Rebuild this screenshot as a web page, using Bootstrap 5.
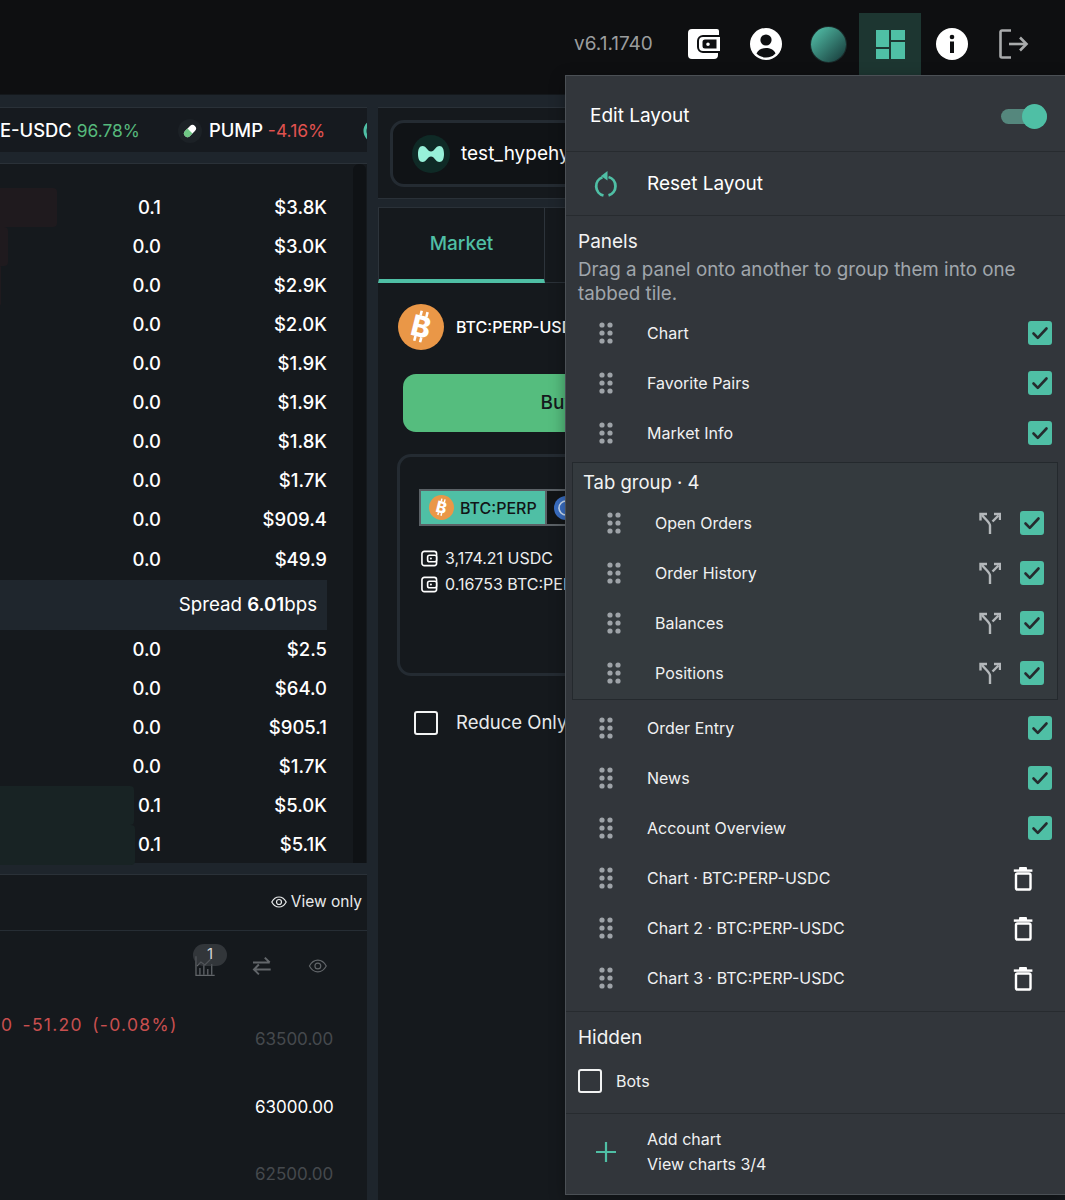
<!DOCTYPE html>
<html lang="en">
<head>
<meta charset="utf-8">
<title>Layout menu</title>
<link href="https://cdn.jsdelivr.net/npm/bootstrap@5.3.0/dist/css/bootstrap.min.css" rel="stylesheet">
<style>
  body { background: #1e252c; color: #fff; font-family: Inter, "Liberation Sans", sans-serif; }
  .app-frame { position: relative; width: 1065px; height: 1200px; overflow: hidden; background: #1e252c; }

  .top-bar { height: 95px; background: #0e0f11; padding-right: 20px; border-bottom: 1px solid #14181c; }
  .version-text { color: #9b9d9e; font-size: 19px; width: 99px; height: 62px; margin-top: 13px; }
  .top-icon { width: 62px; height: 62px; margin-top: 13px; }
  .top-icon.is-active { background: #1d3631; }
  .globe-dot { width: 35px; height: 35px; border-radius: 50%; background: linear-gradient(135deg, #4fb8a2 10%, #1e4a47 85%); box-shadow: 0 0 0 1px #1b2a2a; }

  .main-area { height: 1105px; padding-top: 12px; gap: 11px; }
  .left-col { width: 367px; flex: none; }
  .right-col { width: 687px; flex: none; }
  .dark-panel { background: #15191d; border-top: 1px solid #2a3138; }

  .ticker-bar { height: 45px; padding-top: 1px; font-size: 18.4px; font-weight: 500; white-space: nowrap; overflow: hidden; margin-bottom: 11px; background: #161a1f; }
  .ticker-up { color: #56b97c; font-weight: 400; font-size: 17.4px; }
  .ticker-down { color: #e0524f; font-weight: 400; font-size: 17.5px; }
  .pump-pill { margin: 0 7px 0 38px; flex: none; }
  .next-coin { margin-left: 38px; flex: none; }

  .book-panel { height: 700px; padding-right: 1px; }
  .book-rows { width: 353px; padding-top: 24px; }
  .book-scroll { width: 13px; background: #0f1215; border-radius: 6px 6px 0 0; }
  .book-row { position: relative; height: 39.1px; font-size: 18.5px; font-weight: 500; }
  .book-bar { position: absolute; left: 0; top: 0; bottom: 0; border-radius: 0 4px 4px 0; }
  .bar-sell { background: #1f1a1e; }
  .bar-buy { background: #182324; }
  .book-size { position: relative; width: 161px; text-align: right; }
  .book-total { position: relative; width: 166px; text-align: right; }
  .spread-row { width: 327px; height: 50px; background: #1f262d; padding-right: 10px; font-size: 18.7px; margin-top: 1px; }

  .chart-panel { height: 400px; margin-top: 11px; }
  .chart-head { height: 56px; border-bottom: 1px solid #262d34; padding: 0 5px 2px 0; font-size: 15.5px; color: #e8eaeb; gap: 4px; }
  .chart-tools { height: 70px; gap: 37px; padding: 0 39px 0 195px; position: relative; }
  .tool-badge { position: absolute; left: 193px; top: 13px; width: 34px; height: 22px; border-radius: 11px; background: rgba(70, 74, 78, .6); color: #d4d6d7; font-size: 15px; line-height: 20px; text-align: center; }
  .tool-chart { position: relative; }
  .chart-body { padding-left: 1px; }
  .chart-legend { width: 254px; color: #c84f4f; font-size: 17.5px; letter-spacing: 1.3px; word-spacing: 3px; padding-top: 11px; white-space: nowrap; }
  .axis-col { font-size: 17px; color: #45494d; padding-top: 27px; line-height: 22px; }
  .axis-col div { margin-bottom: 45.5px; }
  .axis-col .axis-now { color: #fff; }

  .account-panel { height: 92px; padding: 12px; margin-bottom: 8px; border-bottom: 1px solid #2a3138; }
  .account-box { width: 400px; height: 67px; border: 3px solid #242b32; border-radius: 14px; background: #101316; padding: 1px 0 0 19px; gap: 11px; font-size: 19px; white-space: nowrap; }
  .order-panel { height: 1000px; }
  .order-tabs { height: 75px; }
  .order-tab { width: 167px; height: 75px; border-right: 1px solid #2d343b; border-left: 1px solid #2d343b; border-bottom: 4px solid #4fbfa5; color: #4fbfa5; font-size: 19px; font-weight: 500; padding-top: 1px; }
  .order-tab-rest { flex: 1; border-bottom: 1px solid #2a3138; }
  .pair-line { padding: 21px 0 0 20px; gap: 12px; font-size: 16px; font-weight: 500; white-space: nowrap; }
  .side-buy { width: 310px; height: 58px; margin: 24px 0 0 25px; background: #55bd7e; border: 0; border-radius: 13px; color: #15191d; font-size: 19px; font-weight: 500; padding: 0; }
  .balance-box { width: 300px; height: 222px; margin: 22px 0 0 19px; border: 3px solid #242b32; border-radius: 14px; padding: 32px 0 0 19px; }
  .asset-tabs { height: 37px; margin-bottom: 19px; }
  .asset-tab { width: 128px; border: 2px solid #5b6166; background: #4fbfa5; color: #121517; font-size: 16px; font-weight: 500; gap: 6px; padding-left: 8px; }
  .asset-tab-other { width: 100px; border: 2px solid #5b6166; border-left: 0; background: #121517; padding-left: 7px; }
  .wallet-line { font-size: 16px; color: #eceeef; gap: 7px; height: 26px; padding-left: 2px; white-space: nowrap; }
  .reduce-line { margin: 33px 0 0 36px; gap: 18px; font-size: 18.5px; color: #e9ebec; white-space: nowrap; }

  .layout-menu { position: absolute; left: 565px; top: 75px; width: 500px; height: 1120px; background: #32363b; border: 1px solid #4b5055; border-right: 0; box-shadow: 0 4px 14px rgba(0,0,0,.35); }
  .menu-head { height: 76px; border-bottom: 1px solid #272b2f; padding: 5px 18px 0 24px; font-size: 19px; }
  .edit-toggle { position: relative; width: 46px; height: 15px; border-radius: 8px; background: #55877d; }
  .edit-toggle::after { content: ""; position: absolute; right: 0; top: -5px; width: 25px; height: 25px; border-radius: 50%; background: #4fbfa5; }
  .menu-reset { height: 64px; border-bottom: 1px solid #272b2f; font-size: 19px; padding: 1px 0 0 28px; gap: 29px; }
  .panel-block { padding: 14px 13px 0 12px; }
  .menu-title { font-size: 19px; line-height: 24px; color: #f2f3f3; }
  .menu-note { font-size: 18.8px; line-height: 24px; color: #a0a6ac; margin-top: 4px; white-space: nowrap; }
  .panel-row { height: 50px; padding-left: 21px; font-size: 16px; color: #f0f1f2; }
  .panel-row .row-label { margin-left: 34px; flex: 1; white-space: nowrap; }
  .panel-list { margin-top: 2px; }
  .tab-group { margin: 4px -6px 3px -6px; border: 1px solid #24292d; background: #343a3e; height: 238px; padding: 7px 13px 0 0; }
  .tab-group .panel-row { padding-left: 34px; }
  .tab-group-title { font-size: 18.5px; line-height: 24px; padding-left: 10px; margin-bottom: 4px; color: #f2f3f3; }
  .split-btn { margin-right: 19px; }
  .trash-btn { margin: 1px 14px 0 0; }
  .trash-list .panel-row { padding-right: 5px; }
  .hidden-block { border-top: 1px solid #272b2f; margin-top: 8px; padding: 14px 12px 0; height: 102px; }
  .hidden-row { height: 42px; margin-top: 10px; gap: 14px; font-size: 16px; color: #f0f1f2; }
  .add-block { border-top: 1px solid #272b2f; height: 82px; padding: 0 0 6px 30px; font-size: 16px; line-height: 25px; color: #f0f1f2; gap: 31px; }

  .form-check-input.pick-box { width: 24px; height: 24px; margin: 0; flex: none; border: 2px solid #f2f3f3; border-radius: 3px; background-color: transparent; }
  .form-check-input.pick-box:checked { background-color: #4fbfa5; border-color: #4fbfa5; background-size: 20px; background-image: url("data:image/svg+xml,%3csvg xmlns='http://www.w3.org/2000/svg' viewBox='0 0 20 20'%3e%3cpath fill='none' stroke='%23252b2e' stroke-linecap='round' stroke-linejoin='round' stroke-width='2.6' d='m3.500 10.500 4.300 4.300L16.500 5.500'/%3e%3c/svg%3e"); }
</style>
</head>
<body>

<svg width="0" height="0" class="d-none">
  <symbol id="grip" viewBox="0 0 14 22"><g fill="#9ea3a8"><circle cx="3" cy="3" r="2.6"/><circle cx="11" cy="3" r="2.6"/><circle cx="3" cy="11" r="2.6"/><circle cx="11" cy="11" r="2.6"/><circle cx="3" cy="19" r="2.6"/><circle cx="11" cy="19" r="2.6"/></g></symbol>
  <symbol id="split" viewBox="0 0 22 22"><g fill="none" stroke="#b4b8bb" stroke-width="2.400"><path d="M11 22V13.500C11 10.500 7 8 3 3"/><path d="M13.500 9.500 19.500 3.500"/><path d="M1.500 8.500V2H8"/><path d="M15 2H21V8"/></g></symbol>
  <symbol id="trash" viewBox="0 0 20 24"><g fill="none" stroke="#fff" stroke-width="2.400"><rect x="3" y="6.500" width="14.500" height="16" rx="1.600"/><path d="M.8 3.600h18.600"/></g><path fill="#fff" d="M6 1.200C6 .5 6.600 0 7.200 0h5.600c.7 0 1.200.5 1.200 1.200V3H6z"/></symbol>
  <symbol id="wallet-line" viewBox="0 0 18 18"><rect x="1" y="1.500" width="15.500" height="15" rx="2.500" fill="none" stroke="#fff" stroke-width="1.700"/><rect x="7" y="5.500" width="9.500" height="7" rx="2" fill="#15191d" stroke="#fff" stroke-width="1.700"/><circle cx="10.500" cy="9" r="1.100" fill="#fff"/></symbol>
  <symbol id="btc" viewBox="0 0 46 46"><circle cx="23" cy="23" r="23" fill="#ea9747"/><g transform="rotate(14 23 23)" fill="#fff"><text x="23" y="33" text-anchor="middle" font-family="Inter, Liberation Sans, sans-serif" font-weight="800" font-size="29">B</text><rect x="18.500" y="7" width="2.600" height="5"/><rect x="24.500" y="7" width="2.600" height="5"/><rect x="18.500" y="33" width="2.600" height="5"/><rect x="24.500" y="33" width="2.600" height="5"/></g></symbol>
</svg>

<div class="app-frame">

  <header class="top-bar d-flex justify-content-end align-items-start">
    <div class="version-text d-flex align-items-center">v6.1.1740</div>
    <div class="top-icon d-flex align-items-center justify-content-center">
      <svg width="32" height="30" viewBox="0 0 32 30"><path fill="#fff" fill-rule="evenodd" d="M4 0h25a2 2 0 0 1 2 2v4H15a6 6 0 0 0-6 6v6a6 6 0 0 0 6 6h15v2a4 4 0 0 1-4 4H4a4 4 0 0 1-4-4V4a4 4 0 0 1 4-4z"/><path fill="#fff" fill-rule="evenodd" d="M15 8h17v14H15a4 4 0 0 1-4-4v-6a4 4 0 0 1 4-4zm2 2.500a2.500 2.500 0 0 0-2.500 2.500v4a2.500 2.500 0 0 0 2.500 2.500h11.500v-9zm3 3a1.800 1.800 0 1 1 0 3.600 1.800 1.800 0 0 1 0-3.600z"/></svg>
    </div>
    <div class="top-icon d-flex align-items-center justify-content-center">
      <svg width="32" height="32" viewBox="0 0 32 32"><circle cx="16" cy="16" r="16" fill="#fff"/><circle cx="16" cy="12" r="5.600" fill="#0e0f11"/><path fill="#0e0f11" d="M6.500 25.500C8 21.500 12 20 16 20s8 1.500 9.500 5.500C23 28 19.800 29.500 16 29.500S9 28 6.500 25.500z"/></svg>
    </div>
    <div class="top-icon d-flex align-items-center justify-content-center"><div class="globe-dot"></div></div>
    <div class="top-icon is-active d-flex align-items-center justify-content-center">
      <svg width="29" height="29" viewBox="0 0 29 29" fill="#4fbfa5"><rect width="13" height="17"/><rect y="19" width="13" height="10"/><rect x="15" width="14" height="10"/><rect x="15" y="12" width="14" height="17"/></svg>
    </div>
    <div class="top-icon d-flex align-items-center justify-content-center">
      <svg width="32" height="32" viewBox="0 0 32 32"><circle cx="16" cy="16" r="16" fill="#fff"/><circle cx="16" cy="9" r="2.300" fill="#0e0f11"/><rect x="14" y="13.500" width="4" height="11.500" fill="#0e0f11"/></svg>
    </div>
    <div class="top-icon d-flex align-items-center justify-content-center">
      <svg width="30" height="30" viewBox="0 0 30 30" fill="none" stroke="#a9abac" stroke-width="2.600"><path d="M12 1.500H3a1.500 1.500 0 0 0-1.500 1.500v24A1.500 1.500 0 0 0 3 28.500h9"/><path d="M10 15h17"/><path d="m21 8.500 6.500 6.500-6.500 6.500"/></svg>
    </div>
  </header>

  <div class="main-area d-flex">
    <div class="left-col">
      <div class="ticker-bar dark-panel d-flex align-items-center">
        <span>E-USDC&nbsp;<span class="ticker-up">96.78%</span></span>
        <svg class="pump-pill" width="24" height="24" viewBox="0 0 24 24"><circle cx="12" cy="12" r="12" fill="#1c2126"/><g transform="rotate(-45 12 12)"><rect x="5" y="8.500" width="14" height="7" rx="3.500" fill="#fff"/><path d="M5 12a3.500 3.500 0 0 1 3.500-3.500H12v7H8.500A3.500 3.500 0 0 1 5 12z" fill="#6fc784"/></g></svg>
        <span>PUMP&nbsp;<span class="ticker-down">-4.16%</span></span>
        <svg class="next-coin" width="24" height="24" viewBox="0 0 24 24"><circle cx="12" cy="12" r="10" fill="none" stroke="#4fbfa5" stroke-width="3"/></svg>
      </div>

      <div class="book-panel dark-panel d-flex">
        <div class="book-rows">
          <div class="book-row d-flex align-items-center"><div class="book-bar bar-sell" style="width:57px"></div><div class="book-size">0.1</div><div class="book-total">$3.8K</div></div>
          <div class="book-row d-flex align-items-center"><div class="book-bar bar-sell" style="width:8px"></div><div class="book-size">0.0</div><div class="book-total">$3.0K</div></div>
          <div class="book-row d-flex align-items-center"><div class="book-bar bar-sell" style="width:1px"></div><div class="book-size">0.0</div><div class="book-total">$2.9K</div></div>
          <div class="book-row d-flex align-items-center"><div class="book-size">0.0</div><div class="book-total">$2.0K</div></div>
          <div class="book-row d-flex align-items-center"><div class="book-size">0.0</div><div class="book-total">$1.9K</div></div>
          <div class="book-row d-flex align-items-center"><div class="book-size">0.0</div><div class="book-total">$1.9K</div></div>
          <div class="book-row d-flex align-items-center"><div class="book-size">0.0</div><div class="book-total">$1.8K</div></div>
          <div class="book-row d-flex align-items-center"><div class="book-size">0.0</div><div class="book-total">$1.7K</div></div>
          <div class="book-row d-flex align-items-center"><div class="book-size">0.0</div><div class="book-total">$909.4</div></div>
          <div class="book-row d-flex align-items-center"><div class="book-size">0.0</div><div class="book-total">$49.9</div></div>
          <div class="spread-row d-flex align-items-center justify-content-end"><span>Spread <b class="fw-semibold">6.01</b>bps</span></div>
          <div class="book-row d-flex align-items-center"><div class="book-size">0.0</div><div class="book-total">$2.5</div></div>
          <div class="book-row d-flex align-items-center"><div class="book-size">0.0</div><div class="book-total">$64.0</div></div>
          <div class="book-row d-flex align-items-center"><div class="book-size">0.0</div><div class="book-total">$905.1</div></div>
          <div class="book-row d-flex align-items-center"><div class="book-size">0.0</div><div class="book-total">$1.7K</div></div>
          <div class="book-row d-flex align-items-center"><div class="book-bar bar-buy" style="width:134px"></div><div class="book-size">0.1</div><div class="book-total">$5.0K</div></div>
          <div class="book-row d-flex align-items-center"><div class="book-bar bar-buy" style="width:135px"></div><div class="book-size">0.1</div><div class="book-total">$5.1K</div></div>
        </div>
        <div class="book-scroll"></div>
      </div>

      <div class="chart-panel dark-panel">
        <div class="chart-head d-flex align-items-center justify-content-end">
          <svg width="16" height="12" viewBox="0 0 16 12" fill="none" stroke="#e8eaeb" stroke-width="1.200"><path d="M.8 6C2.500 2.800 5 1 8 1s5.500 1.800 7.200 5C13.500 9.200 11 11 8 11S2.500 9.200.8 6z"/><circle cx="8" cy="6" r="2.500"/></svg>
          <span>View only</span>
        </div>
        <div class="chart-tools d-flex align-items-center">
          <svg class="tool-chart" width="20" height="20" viewBox="0 0 20 20" fill="none" stroke="#62666a" stroke-width="1.300"><path d="M1 0v19.500h19"/><path d="M5 19v-7M9 19V9M13 19v-6M17 19V8"/><path d="m2 10 4-4 4 3 6-6"/></svg>
          <div class="tool-badge">1</div>
          <svg width="20" height="20" viewBox="0 0 20 20" fill="none" stroke="#62666a" stroke-width="2"><path d="M1 6.500h17M13 1.500l5 5M19 13.500H2M7 8.500l-5 5 5 5"/></svg>
          <svg width="20" height="14" viewBox="0 0 16 12" fill="none" stroke="#62666a" stroke-width="1"><path d="M.8 6C2.500 2.800 5 1 8 1s5.500 1.800 7.200 5C13.500 9.200 11 11 8 11S2.500 9.200.8 6z"/><circle cx="8" cy="6" r="2.500"/></svg>
        </div>
        <div class="chart-body d-flex">
          <div class="chart-legend">0 -51.20 (-0.08%)</div>
          <div class="axis-col">
            <div>63500.00</div>
            <div class="axis-now">63000.00</div>
            <div>62500.00</div>
          </div>
        </div>
      </div>
    </div>

    <div class="right-col">
      <div class="account-panel dark-panel">
        <div class="account-box d-flex align-items-center">
          <svg width="38" height="38" viewBox="0 0 38 38"><circle cx="19" cy="19" r="19" fill="#0f2a26"/><path fill="#97f1d9" d="M6 19c0-5 1.500-8 4.500-8 4 0 5 5.500 8.500 5.500S23.500 11 27.500 11c3 0 4.500 3 4.500 8s-1.500 8-4.500 8c-4 0-5-5.500-8.500-5.500S14.500 27 10.500 27C7.500 27 6 24 6 19z"/></svg>
          <span>test_hypehyper</span>
        </div>
      </div>
      <div class="order-panel dark-panel">
        <div class="order-tabs d-flex">
          <div class="order-tab d-flex align-items-center justify-content-center">Market</div>
          <div class="order-tab-rest"></div>
        </div>
        <div class="pair-line d-flex align-items-center">
          <svg width="46" height="46"><use href="#btc"/></svg>
          <span>BTC:PERP-USDC</span>
        </div>
        <button type="button" class="btn side-buy d-block">Buy</button>
        <div class="balance-box">
          <div class="asset-tabs d-flex">
            <div class="asset-tab d-flex align-items-center">
              <svg width="25" height="25"><use href="#btc"/></svg>
              <span>BTC:PERP</span>
            </div>
            <div class="asset-tab-other d-flex align-items-center">
              <svg width="24" height="24" viewBox="0 0 24 24"><circle cx="12" cy="12" r="12" fill="#3a6fc4"/><circle cx="12" cy="12" r="7" fill="none" stroke="#cfe0f5" stroke-width="1.600"/></svg>
            </div>
          </div>
          <div class="wallet-line d-flex align-items-center"><svg width="17" height="17"><use href="#wallet-line"/></svg><span>3,174.21 USDC</span></div>
          <div class="wallet-line d-flex align-items-center"><svg width="17" height="17"><use href="#wallet-line"/></svg><span>0.16753 BTC:PERP</span></div>
        </div>
        <div class="reduce-line d-flex align-items-center">
          <input class="form-check-input pick-box" type="checkbox">
          <span>Reduce Only</span>
        </div>
      </div>
    </div>
  </div>

  <div class="layout-menu">
    <div class="menu-head d-flex align-items-center justify-content-between">
      <span>Edit Layout</span>
      <div class="edit-toggle"></div>
    </div>
    <div class="menu-reset d-flex align-items-center">
      <svg width="24" height="26" viewBox="0 0 24 26" fill="none" stroke="#4fbfa5" stroke-width="2.800"><path d="M8.500 6.300A9.500 9.500 0 0 0 9.500 24.500"/><path d="M14.500 6a9.500 9.500 0 0 1 0 18.300"/><path fill="#4fbfa5" stroke="none" d="M13.500 0v9.500L7 5z"/></svg>
      <span>Reset Layout</span>
    </div>
    <div class="panel-block">
      <div class="menu-title">Panels</div>
      <div class="menu-note">Drag a panel onto another to group them into one<br>tabbed tile.</div>
      <div class="panel-list">
        <div class="panel-row d-flex align-items-center"><svg width="14" height="22"><use href="#grip"/></svg><span class="row-label">Chart</span><input class="form-check-input pick-box" type="checkbox" checked></div>
        <div class="panel-row d-flex align-items-center"><svg width="14" height="22"><use href="#grip"/></svg><span class="row-label">Favorite Pairs</span><input class="form-check-input pick-box" type="checkbox" checked></div>
        <div class="panel-row d-flex align-items-center"><svg width="14" height="22"><use href="#grip"/></svg><span class="row-label">Market Info</span><input class="form-check-input pick-box" type="checkbox" checked></div>

        <div class="tab-group">
          <div class="tab-group-title">Tab group · 4</div>
          <div class="panel-row d-flex align-items-center"><svg width="14" height="22"><use href="#grip"/></svg><span class="row-label">Open Orders</span><svg class="split-btn" width="22" height="22"><use href="#split"/></svg><input class="form-check-input pick-box" type="checkbox" checked></div>
          <div class="panel-row d-flex align-items-center"><svg width="14" height="22"><use href="#grip"/></svg><span class="row-label">Order History</span><svg class="split-btn" width="22" height="22"><use href="#split"/></svg><input class="form-check-input pick-box" type="checkbox" checked></div>
          <div class="panel-row d-flex align-items-center"><svg width="14" height="22"><use href="#grip"/></svg><span class="row-label">Balances</span><svg class="split-btn" width="22" height="22"><use href="#split"/></svg><input class="form-check-input pick-box" type="checkbox" checked></div>
          <div class="panel-row d-flex align-items-center"><svg width="14" height="22"><use href="#grip"/></svg><span class="row-label">Positions</span><svg class="split-btn" width="22" height="22"><use href="#split"/></svg><input class="form-check-input pick-box" type="checkbox" checked></div>
        </div>

        <div class="panel-row d-flex align-items-center"><svg width="14" height="22"><use href="#grip"/></svg><span class="row-label">Order Entry</span><input class="form-check-input pick-box" type="checkbox" checked></div>
        <div class="panel-row d-flex align-items-center"><svg width="14" height="22"><use href="#grip"/></svg><span class="row-label">News</span><input class="form-check-input pick-box" type="checkbox" checked></div>
        <div class="panel-row d-flex align-items-center"><svg width="14" height="22"><use href="#grip"/></svg><span class="row-label">Account Overview</span><input class="form-check-input pick-box" type="checkbox" checked></div>
        <div class="trash-list">
          <div class="panel-row d-flex align-items-center"><svg width="14" height="22"><use href="#grip"/></svg><span class="row-label">Chart · BTC:PERP-USDC</span><svg class="trash-btn" width="20" height="24"><use href="#trash"/></svg></div>
          <div class="panel-row d-flex align-items-center"><svg width="14" height="22"><use href="#grip"/></svg><span class="row-label">Chart 2 · BTC:PERP-USDC</span><svg class="trash-btn" width="20" height="24"><use href="#trash"/></svg></div>
          <div class="panel-row d-flex align-items-center"><svg width="14" height="22"><use href="#grip"/></svg><span class="row-label">Chart 3 · BTC:PERP-USDC</span><svg class="trash-btn" width="20" height="24"><use href="#trash"/></svg></div>
        </div>
      </div>
    </div>
    <div class="hidden-block">
      <div class="menu-title">Hidden</div>
      <div class="hidden-row d-flex align-items-center">
        <input class="form-check-input pick-box" type="checkbox">
        <span>Bots</span>
      </div>
    </div>
    <div class="add-block d-flex align-items-center">
      <svg width="20" height="20" viewBox="0 0 20 20" stroke="#4fbfa5" stroke-width="2.200"><path d="M10 0v20M0 10h20"/></svg>
      <div>
        <div>Add chart</div>
        <div>View charts 3/4</div>
      </div>
    </div>
  </div>

</div>

<script src="https://cdn.jsdelivr.net/npm/bootstrap@5.3.0/dist/js/bootstrap.bundle.min.js"></script>
</body>
</html>
